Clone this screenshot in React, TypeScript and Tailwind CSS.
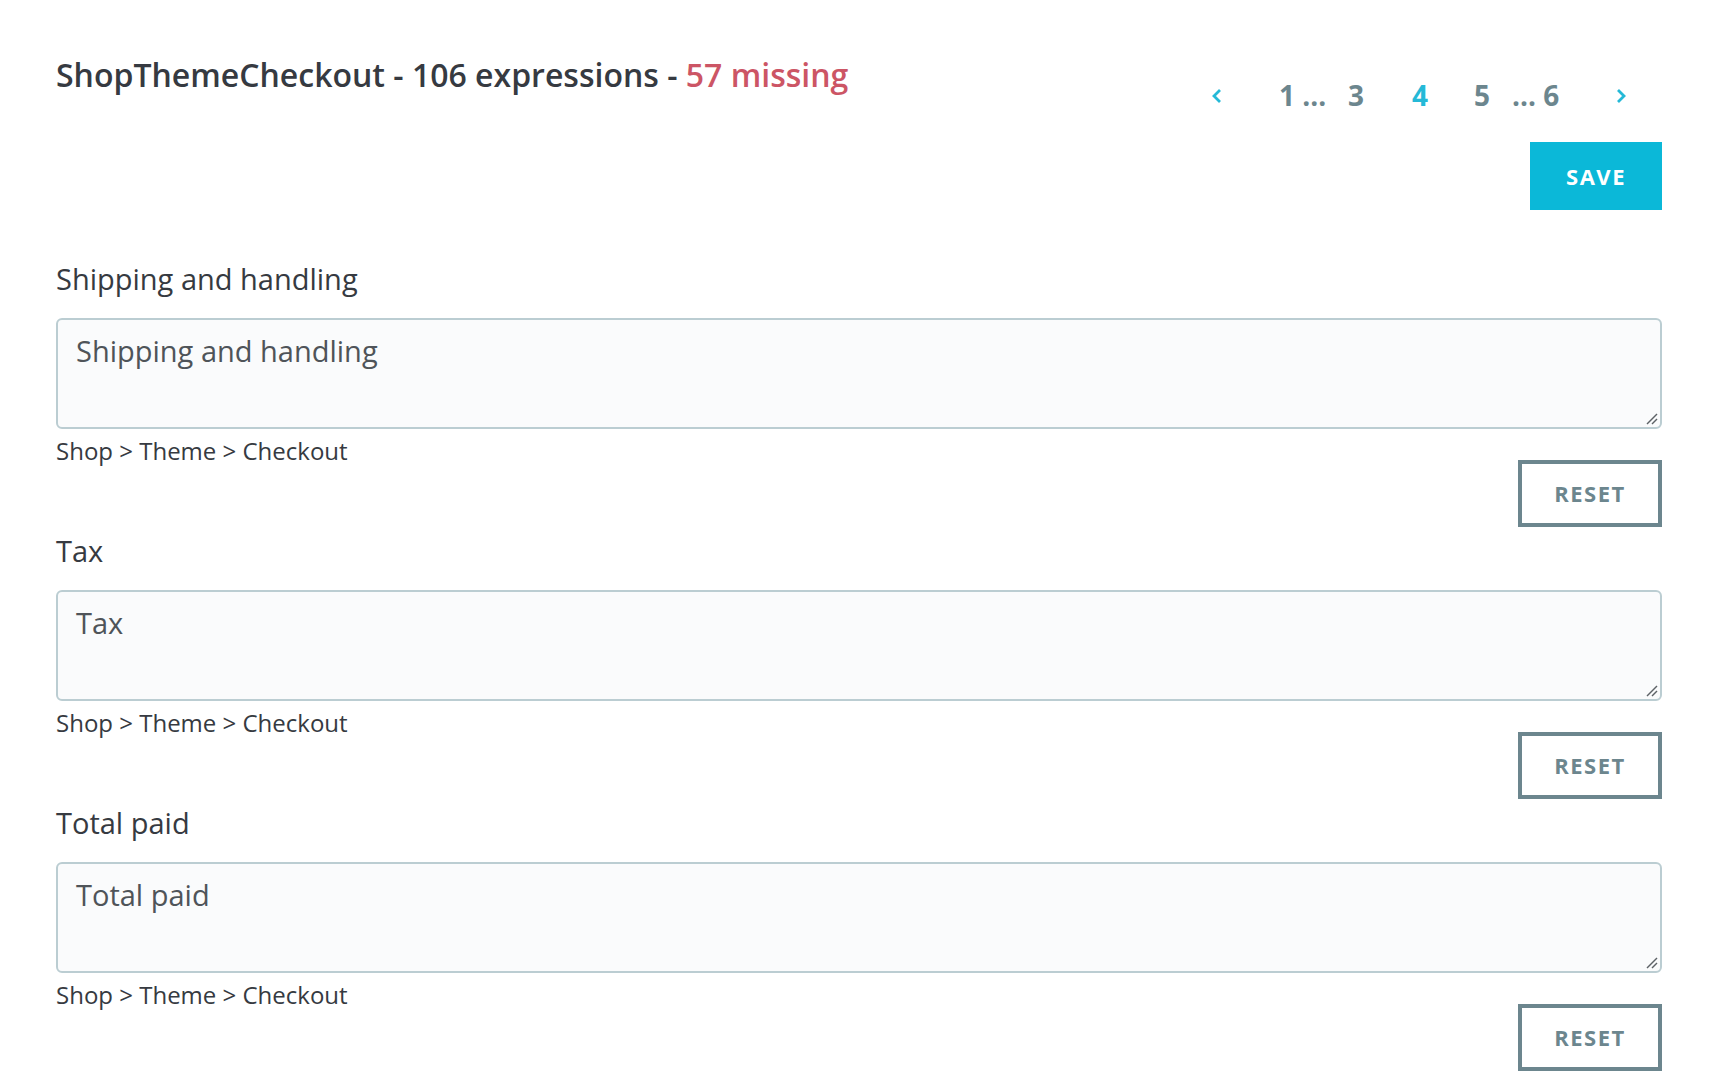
import React from "react";

const sections = [
  { label: "Shipping and handling", value: "Shipping and handling" },
  { label: "Tax", value: "Tax" },
  { label: "Total paid", value: "Total paid" },
];

function ChevronLeft() {
  return (
    <svg width="12" height="16" viewBox="0 0 12 16" fill="none">
      <polyline points="9,2 3,8 9,14" stroke="#25b9d7" strokeWidth="2.8" strokeLinecap="butt" strokeLinejoin="miter" />
    </svg>
  );
}

function ChevronRight() {
  return (
    <svg width="12" height="16" viewBox="0 0 12 16" fill="none">
      <polyline points="2,2 8,8 2,14" stroke="#25b9d7" strokeWidth="2.8" strokeLinecap="butt" strokeLinejoin="miter" />
    </svg>
  );
}

function Grip() {
  return (
    <svg width="14" height="14" viewBox="0 0 14 14" fill="none">
      <line x1="13" y1="3" x2="3" y2="13" stroke="#5d6266" strokeWidth="1.4" />
      <line x1="13" y1="8" x2="8" y2="13" stroke="#5d6266" strokeWidth="1.4" />
    </svg>
  );
}

export default function App() {
  return (
    <div
      className="min-h-[1076px] bg-white pl-[56px] pr-[54px] pt-[54px] text-[#363a41]"
      style={{ fontFamily: '"Open Sans", "Noto Sans", sans-serif' }}
    >
      <div className="flex items-start justify-between">
        <h1 className="mt-[2px] text-[32px] font-semibold leading-[37px] text-[#363a41]">
          ShopThemeCheckout - 106 expressions - <span className="text-[#cc5565]">57 missing</span>
        </h1>
        <div className="flex flex-col items-end">
          <div className="mt-[23px] flex h-[36px] items-center text-[28px] font-bold leading-[36px] text-[#6c868e] whitespace-pre">
            <span className="flex w-[79px] items-center pl-[11px] pt-[2px]">
              <ChevronLeft />
            </span>
            <span className="w-[69px]">1 ...</span>
            <span className="w-[64px]">3</span>
            <span className="w-[62px] text-[#25b9d7]">4</span>
            <span className="w-[38px]">5</span>
            <span className="w-[104px]">... 6</span>
            <span className="mr-[34px] flex items-center pt-[2px]">
              <ChevronRight />
            </span>
          </div>
          <button className="mt-[29px] h-[68px] w-[132px] bg-[#0bb8d8] text-[22px] font-bold uppercase tracking-[1.5px] text-white">
            Save
          </button>
        </div>
      </div>

      <div className="mt-[50px] flex flex-col">
        {sections.map((s) => (
          <div key={s.label} className="mb-[5px] flex flex-col">
            <label className="text-[29px] leading-[38px] text-[#363a41]">{s.label}</label>
            <div className="relative mt-[20px]">
              <textarea
                defaultValue={s.value}
                className="block h-[111px] w-full resize-none rounded-[6px] border-2 border-[#bbcdd2] bg-[#fafbfc] px-[18px] pt-[12px] text-[29px] leading-[38px] text-[#4f5459] outline-none"
              />
              <span className="pointer-events-none absolute bottom-[4px] right-[4px] flex">
                <Grip />
              </span>
            </div>
            <div className="mt-[10px] text-[24px] leading-[24px] text-[#363a41]">Shop &gt; Theme &gt; Checkout</div>
            <div className="-mt-[3px] flex justify-end">
              <button className="h-[67px] w-[144px] border-4 border-[#6c868e] bg-white text-[22px] font-bold uppercase tracking-[1.5px] text-[#6c868e]">
                Reset
              </button>
            </div>
          </div>
        ))}
      </div>
    </div>
  );
}
